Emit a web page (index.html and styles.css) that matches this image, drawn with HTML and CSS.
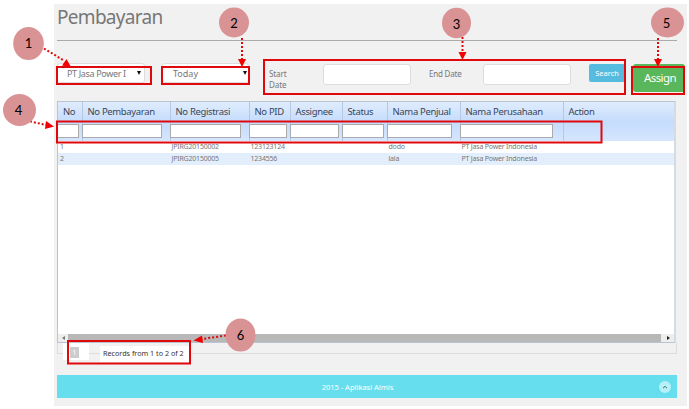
FILE: index.html
```html
<!DOCTYPE html>
<html lang="id">
<head>
<meta charset="utf-8">
<title>Pembayaran</title>
<link rel="stylesheet" href="styles.css">
</head>
<body>
<main class="page">
  <h1 class="title"><span>Pembayaran</span></h1>
  <section class="toolbar">
    <div class="select company"><span>PT Jasa Power I</span><i class="caret"></i></div>
    <div class="select period"><span>Today</span><i class="caret"></i></div>
    <div class="dates">
      <label class="label start">Start<br>Date</label>
      <div class="field"></div>
      <label class="label end">End Date</label>
      <div class="field"></div>
      <button class="search">Search</button>
    </div>
    <button class="assign">Assign</button>
  </section>
  <section class="table">
    <div class="row head">
      <div class="cell"><span class="name">No</span><div class="filter"></div></div>
      <div class="cell wide-gap"><span class="name">No Pembayaran</span><div class="filter"></div></div>
      <div class="cell wide-gap"><span class="name">No Registrasi</span><div class="filter"></div></div>
      <div class="cell"><span class="name">No PID</span><div class="filter"></div></div>
      <div class="cell"><span class="name">Assignee</span><div class="filter"></div></div>
      <div class="cell"><span class="name">Status</span><div class="filter"></div></div>
      <div class="cell wide-gap"><span class="name">Nama Penjual</span><div class="filter"></div></div>
      <div class="cell widest-gap"><span class="name">Nama Perusahaan</span><div class="filter"></div></div>
      <div class="cell"><span class="name">Action</span></div>
    </div>
    <div class="row data"><span>1</span><span></span><span>JPIRG20150002</span><span>123123124</span><span></span><span></span><span>dodo</span><span>PT Jasa Power Indonesia</span><span></span></div>
    <div class="row data alt"><span>2</span><span></span><span>JPIRG20150005</span><span>1234556</span><span></span><span></span><span>lala</span><span>PT Jasa Power Indonesia</span><span></span></div>
    <div class="scroll"><i class="arrow left"></i><div class="thumb"></div><i class="arrow right"></i></div>
  </section>
  <section class="pager">
    <div class="pages"><span class="current">1</span></div>
    <div class="records"><span>Records from 1 to 2 of 2</span></div>
  </section>
  <footer class="footer">
    <span class="copy">2015 - Aplikasi Almis</span>
    <svg class="top" viewBox="0 0 12 12"><circle cx="6" cy="6" r="6"/><path d="M4 7.2 6 5.3 8 7.2"/></svg>
  </footer>
</main>
<svg class="notes" viewBox="0 0 689 409">
  <g class="boxes">
    <rect x="57" y="67" width="94" height="17"/>
    <rect x="162" y="67" width="87" height="17"/>
    <rect x="264" y="60" width="361" height="34"/>
    <rect x="632" y="67" width="52" height="27"/>
    <rect x="57" y="121.500" width="544.500" height="21"/>
    <rect x="68" y="341" width="122" height="22.500"/>
  </g>
  <g class="lines">
    <path d="M44 48.500 63 60"/>
    <path d="M242 38v22"/>
    <path d="M462.500 37v16"/>
    <path d="M658 38v22"/>
    <path d="M30 121.300 46 125"/>
    <path d="M226 335.500 202 339"/>
  </g>
  <g class="heads">
    <path d="M66.500 59 71 67 62 65.500Z"/>
    <path d="M238 59h8l-4 8Z"/>
    <path d="M458.500 52h8l-4 8Z"/>
    <path d="M654 59h8l-4 8Z"/>
    <path d="M46 121 54 126.500 45 129Z"/>
    <path d="M202 335.500 193.500 340.500 203 343Z"/>
  </g>
  <g class="dots">
    <ellipse cx="28.500" cy="43.500" rx="15.300" ry="16.500"/>
    <ellipse cx="234" cy="22.500" rx="15" ry="15"/>
    <ellipse cx="456.500" cy="23" rx="14.500" ry="15.200"/>
    <ellipse cx="667.500" cy="22.500" rx="16.500" ry="15"/>
    <ellipse cx="19.500" cy="110" rx="16.500" ry="16"/>
    <ellipse cx="240.500" cy="335" rx="15" ry="16.500"/>
  </g>
  <g class="nums">
    <text x="28.500" y="48">1</text>
    <text x="234" y="28">2</text>
    <text x="456.500" y="29">3</text>
    <text x="666.500" y="28">5</text>
    <text x="18.500" y="115">4</text>
    <text x="240.500" y="340">6</text>
  </g>
</svg>
</body>
</html>
```
FILE: styles.css
```css
* { box-sizing: border-box; }
body {
  margin: 0;
  width: 689px;
  height: 409px;
  overflow: hidden;
  position: relative;
  background: #fff;
  font-family: "Noto Sans", "Open Sans", sans-serif;
  color: #777;
}
button { border: 0; padding: 0; font-family: inherit; }
.page {
  width: 633px;
  height: 402px;
  margin: 4px 0 0 54px;
  padding-left: 3px;
  background: #f1f1f1;
}
.title {
  margin: 0;
  width: 620px;
  height: 37px;
  border-bottom: 1px solid #aaa;
  font-size: 19px;
  line-height: 27px;
  font-weight: 400;
  letter-spacing: -.7px;
}
.toolbar {
  display: flex;
  align-items: flex-start;
  height: 60px;
  padding-top: 22px;
}
.select {
  display: flex;
  align-items: center;
  justify-content: space-between;
  height: 20px;
  padding-left: 9px;
  background: #fff;
  border: 1px solid #ddd;
  border-radius: 3px;
  font-size: 9px;
  letter-spacing: -.35px;
  white-space: nowrap;
}
.company { width: 88px; padding-right: 3px; margin-right: 17px; }
.period { width: 87px; padding-left: 10px; padding-right: 1px; margin-right: 20px; letter-spacing: 0; }
.caret {
  border: 2px solid transparent;
  border-top: 4px solid #111;
  border-bottom: 0;
}
.dates { display: flex; width: 362px; }
.label { font-size: 8px; line-height: 11px; white-space: nowrap; }
.start { width: 54px; padding-top: 5px; letter-spacing: -.1px; }
.end { width: 72px; padding: 5px 0 0 18px; letter-spacing: -.2px; }
.field {
  width: 88px;
  height: 21px;
  margin-top: 1px;
  background: #fff;
  border: 1px solid #ddd;
  border-radius: 3px;
}
.search {
  width: 36px;
  height: 18px;
  margin: 1px 0 0 18px;
  border-radius: 2px;
  background: #55bcdf;
  color: #fff;
  font-size: 7.5px;
  line-height: 17px;
}
.assign {
  width: 52px;
  height: 28px;
  margin: 1px 0 0 2px;
  padding-left: 2px;
  border-radius: 3px;
  background: #5ab65a;
  color: #fff;
  font-size: 11.5px;
  line-height: 26px;
  letter-spacing: -.6px;
}
.table {
  display: flex;
  flex-direction: column;
  width: 619px;
  height: 242px;
  background: #fff;
  border: 1px solid #b9c5d2;
  border-right: 2px solid #d5dbe3;
}
.row {
  display: grid;
  grid-template-columns: 23.500px 88px 79px 41px 52px 45px 73px 103px 1fr;
}
.head { height: 39px; background: linear-gradient(#e0ecfd, #c5dcfd 50%, #d5e6fe); }
.cell {
  padding-right: 3px;
  border-left: 1px solid #b5c8e0;
}
.cell:first-child { border-left: 0; }
.name {
  display: block;
  height: 22px;
  padding-left: 5px;
  color: #3a4655;
  font-size: 9.5px;
  letter-spacing: -.35px;
  line-height: 19px;
  white-space: nowrap;
}
.filter {
  height: 14px;
  margin-left: -1px;
  background: #fff;
  border: 1px solid #aaa;
}
.wide-gap { padding-right: 8px; }
.widest-gap { padding-right: 10px; }
.data {
  height: 12px;
  padding-left: 2px;
  font-size: 7px;
  line-height: 12px;
  letter-spacing: -.2px;
  white-space: nowrap;
}
.alt { background: #e3eefd; }
.scroll {
  display: flex;
  align-items: center;
  justify-content: space-between;
  height: 8px;
  margin-top: auto;
  padding: 0 4px;
  background: #eee;
}
.thumb { width: 593px; height: 8px; margin-right: auto; margin-left: 3px; background: #b8b8b8; }
.arrow { border: 2px solid transparent; }
.left { border-left: 0; border-right: 3px solid #777; }
.right { border-right: 0; border-left: 3px solid #222; }
.pager {
  display: flex;
  width: 620px;
  height: 11px;
  padding-left: 5px;
  border: 1px solid #ddd;
  border-top: 0;
}
.pages {
  width: 26px;
  height: 17px;
  padding: 4px 0 0 7px;
  background: #fff;
}
.current {
  display: block;
  width: 9px;
  height: 11px;
  background: #ccc;
  color: #fff;
  font-size: 7.5px;
  line-height: 10px;
  text-align: center;
}
.records {
  width: 90px;
  height: 16px;
  margin: 3px 0 0 11px;
  padding-left: 3px;
  background: #fff;
  color: #333;
  font-size: 7.2px;
  line-height: 15px;
  white-space: nowrap;
}
.footer {
  display: flex;
  align-items: center;
  width: 620px;
  height: 23px;
  margin-top: 21px;
  padding-right: 6px;
  background: #67deee;
  color: #fff;
  font-size: 7.5px;
}
.copy { flex: 1; padding-right: 1px; text-align: center; line-height: 22px; }
.top { width: 12px; height: 12px; fill: #b5f1f7; }
.top path { fill: none; stroke: #39717a; }
.notes { position: absolute; top: 0; left: 0; width: 689px; height: 409px; }
.boxes { fill: none; stroke: #e1080c; stroke-width: 2; }
.lines { fill: none; stroke: #e1080c; stroke-width: 2; stroke-dasharray: 2 2; }
.heads { fill: #f30000; }
.dots { fill: #d99394; }
.nums { fill: #000; font: 13px Lato, sans-serif; text-anchor: middle; }
```
